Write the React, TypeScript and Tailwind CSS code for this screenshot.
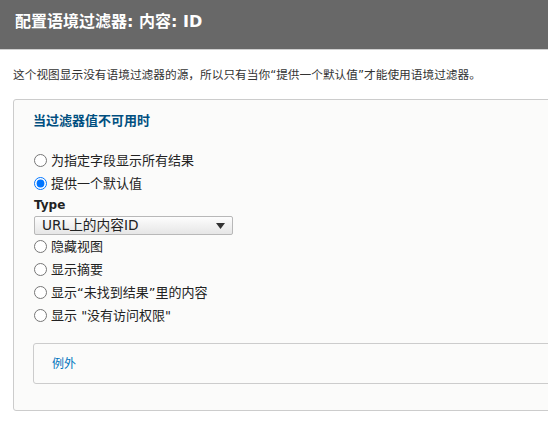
import React from "react";

const font = { fontFamily: '"DejaVu Sans", "Noto Sans CJK SC", sans-serif' };

function Radio({ checked, label }: { checked?: boolean; label: string }) {
  return (
    <label className="flex items-center h-[23px] pl-[1px] text-[13px] text-[#222]">
      <input type="radio" name="opt" defaultChecked={checked} className="w-[13px] h-[13px] m-0" />
      <span className="ml-[4px] leading-[18px]">{label}</span>
    </label>
  );
}

export default function App() {
  return (
    <div className="w-[548px] h-[422px] overflow-hidden bg-white" style={font}>
      <div className="h-[50px] bg-[#686868] border-b border-[#d0d0d0] pl-[15px] pt-[11px]">
        <h1 className="text-[16px] leading-[22px] font-bold text-white">配置语境过滤器: 内容: ID</h1>
      </div>
      <div className="pl-[13px]">
        <p className="mt-[16px] text-[11.7px] leading-[18px] text-[#333] whitespace-nowrap">
          这个视图显示没有语境过滤器的源，所以只有当你“提供一个默认值”才能使用语境过滤器。
        </p>
        <div className="mt-[15px] w-[600px] border border-[#cccccc] rounded-[3px] bg-[#fbfbfa] pl-[19px] pt-[12px] pb-[26px]">
          <div className="text-[13px] leading-[18px] font-bold text-[#004f80]">当过滤器值不可用时</div>
          <div className="mt-[19px]">
            <Radio label="为指定字段显示所有结果" />
            <Radio checked label="提供一个默认值" />
            <div className="h-[19px] flex items-center pl-[1px] text-[12px] font-bold text-[#222]">Type</div>
            <div
              role="combobox"
              className="mt-[2px] ml-[1px] w-[199px] h-[19px] flex items-center justify-between border border-[#b8b8b8] rounded-[2px] bg-gradient-to-b from-[#fdfdfd] to-[#e6e6e6] pl-[7px] pr-[7px] text-[13.7px] text-[#222]"
            >
              <span className="leading-[17px]">URL上的内容ID</span>
              <svg width="9" height="6" viewBox="0 0 9 6">
                <path d="M0 0 H9 L4.5 6 Z" fill="#333" />
              </svg>
            </div>
            <Radio label="隐藏视图" />
            <Radio label="显示摘要" />
            <Radio label="显示“未找到结果”里的内容" />
            <Radio label='显示 "没有访问权限"' />
          </div>
          <div className="mt-[16px] h-[41px] border border-[#cccccc] rounded-[3px] bg-[#fbfbfa] pl-[18px] flex items-center">
            <span className="text-[12px] text-[#0074bd]">例外</span>
          </div>
        </div>
      </div>
    </div>
  );
}
